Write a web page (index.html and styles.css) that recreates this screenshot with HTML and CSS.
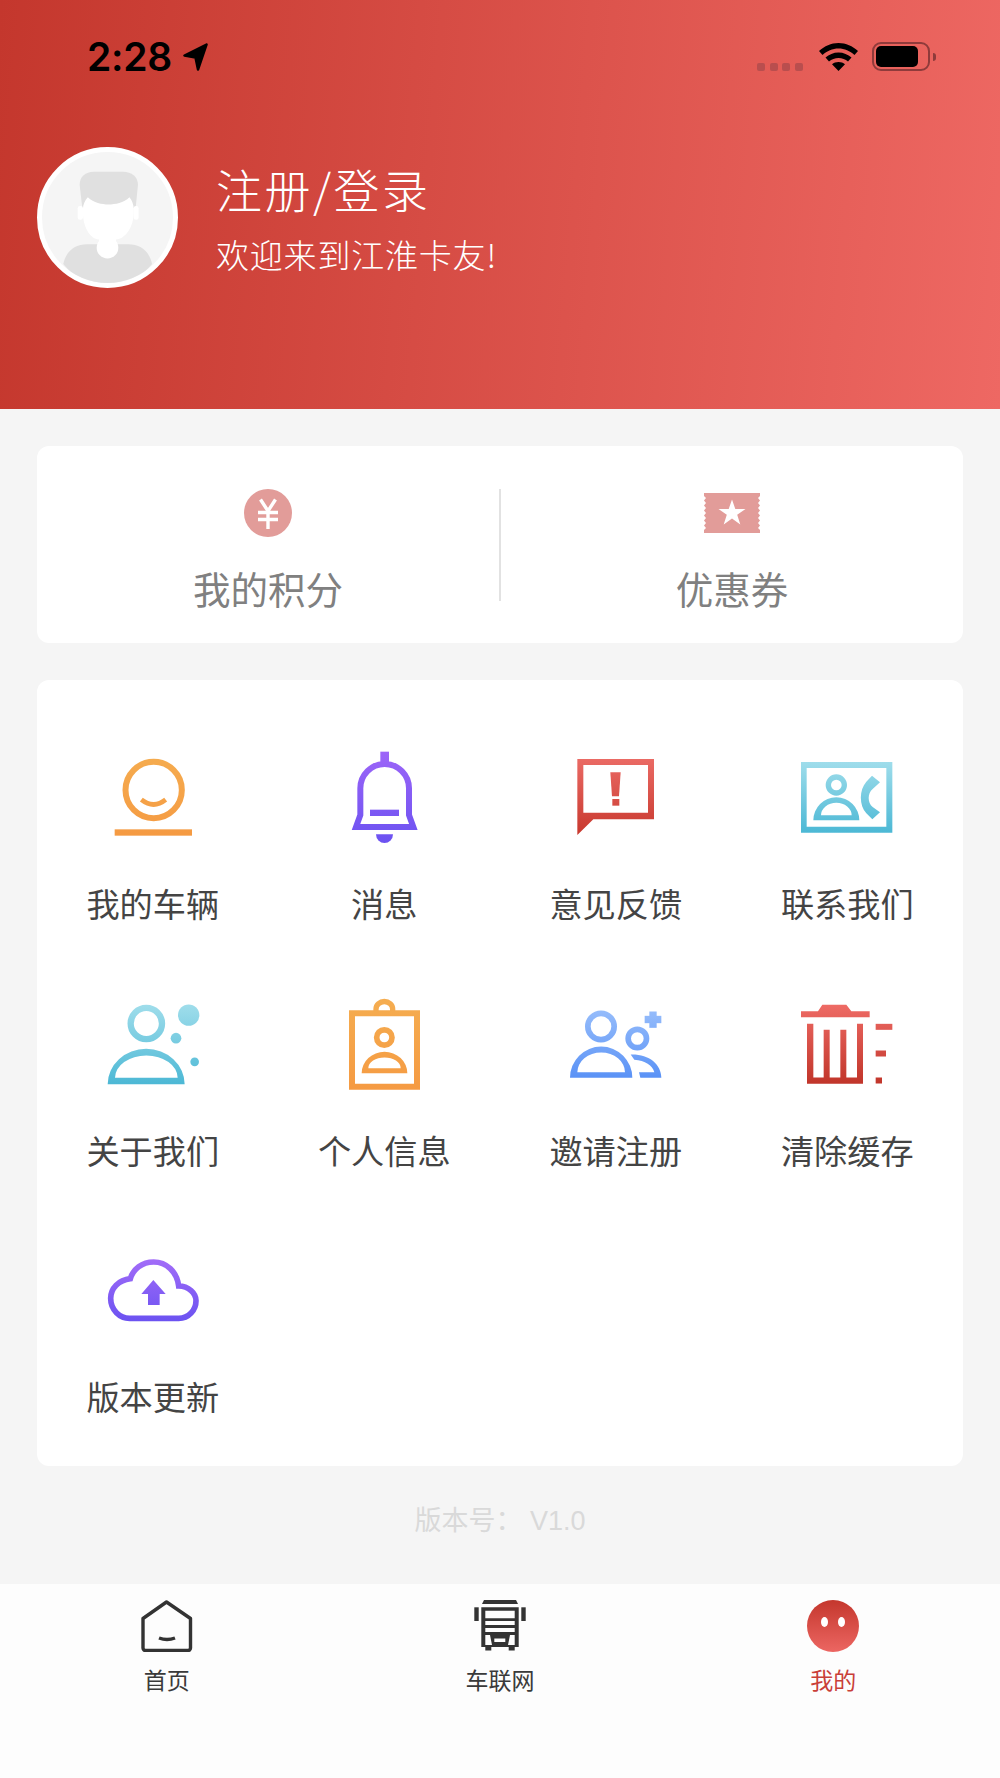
FILE: index.html
```html
<!DOCTYPE html>
<html lang="zh">
<head>
<meta charset="utf-8">
<title>我的</title>
<link rel="stylesheet" href="styles.css">
</head>
<body>
<div class="page">
  <header class="hero">
    <div class="status">
      <span class="time">2:28</span>
      <svg class="loc" viewBox="0 0 25 28"><path d="M23.500 1.500L1.500 12.500L12.500 14.500L15 26.500Z" fill="#000" stroke="#000" stroke-width="2.500" stroke-linejoin="round"/></svg>
      <div class="status-right">
        <div class="dots"><i></i><i></i><i></i><i></i></div>
        <svg class="wifi" viewBox="0 0 39 28"><path d="M19.5 0C12 0 5.5 3 0 8l3.5 4C8 8 13.500 5.500 19.500 5.500S31 8 35.500 12L39 8C33.500 3 27 0 19.500 0Z M19.500 9.500C14.500 9.500 10 11.500 6.500 14.500L10 18.500C12.500 16.500 16 15 19.500 15S26.500 16.500 29 18.500L32.500 14.500C29 11.500 24.500 9.500 19.500 9.500Z M19.500 19C17 19 14.800 19.800 13 21.200L19.500 28L26 21.200C24.200 19.800 22 19 19.500 19Z" fill="#000"/></svg>
        <div class="battery"><div class="battery-fill"></div></div>
        <div class="nub"></div>
      </div>
    </div>
    <div class="profile">
      <div class="avatar">
        <svg viewBox="32 30 400 400" class="avatar-art">
          <path d="M97 372C105 335 130 312 170 312H295C335 312 360 335 368 372C330 420 280 435 232 435S135 420 97 372Z" fill="#e0e0e0"/>
          <path d="M147 130C147 105 165 90 190 90H280C305 90 325 105 325 130L318 200H155Z" fill="#e0e0e0"/>
          <path d="M157 205C157 190 163 178 172 168C190 185 215 190 235 190S282 185 299 168C307 178 312 190 312 205V215C312 260 285 297 258 297V322A26 30 0 0 1 206 322V297C180 297 157 260 157 215Z" fill="#fff"/>
          <rect x="141" y="195" width="16" height="42" rx="7" fill="#fff"/>
          <rect x="312" y="195" width="15" height="42" rx="7" fill="#fff"/>
          <circle cx="232" cy="322" r="33" fill="#fff"/>
        </svg>
      </div>
      <div class="who">
        <div class="who-title">注册/登录</div>
        <div class="who-sub">欢迎来到江淮卡友!</div>
      </div>
    </div>
  </header>

  <main class="content">
    <section class="card points">
      <div class="point point-left">
        <svg class="point-icon" viewBox="0 0 56 48">
          <circle cx="28" cy="24" r="24" fill="#e29c99"/>
          <path d="M20.500 10.500L28 22L35.500 10.500 M18 23.500H38 M18 30.500H38 M28 22V40" fill="none" stroke="#fff" stroke-width="3.400"/>
        </svg>
        <span class="point-label">我的积分</span>
      </div>
      <div class="point">
        <svg class="point-icon" viewBox="0 0 56 48">
          <path d="M0 4H56V7L54 9L56 11.500L54 14L56 16.500L54 19L56 21.500L54 24L56 26.500L54 29L56 31.500L54 34L56 36.500L54 39L56 41V44H0V41L2 39L0 36.500L2 34L0 31.500L2 29L0 26.500L2 24L0 21.500L2 19L0 16.500L2 14L0 11.500L2 9L0 7Z" fill="#e29c99"/>
          <path d="M28 10.500L31.300 20H41.500L33.200 25.800L36.300 35.500L28 29.500L19.700 35.500L22.800 25.800L14.500 20H24.700Z" fill="#fff"/>
        </svg>
        <span class="point-label">优惠券</span>
      </div>
    </section>

    <section class="card menu">
      <div class="cell">
        <svg class="ico" viewBox="98 15 360 330">
          <defs><linearGradient id="g1" gradientUnits="userSpaceOnUse" x1="0" y1="85" x2="0" y2="317"><stop offset="0" stop-color="#f5ab4e"/><stop offset="1" stop-color="#f59a42"/></linearGradient></defs>
          <circle cx="280" cy="180" r="84.500" fill="none" stroke="url(#g1)" stroke-width="18"/>
          <path d="M243 209Q280 238 316 209" fill="none" stroke="url(#g1)" stroke-width="14"/>
          <rect x="163" y="298" width="232" height="19" fill="url(#g1)"/>
        </svg>
        <span class="cell-label">我的车辆</span>
      </div>
      <div class="cell">
        <svg class="ico" viewBox="792 15 360 330">
          <defs><linearGradient id="g2" gradientUnits="userSpaceOnUse" x1="0" y1="65" x2="0" y2="340"><stop offset="0" stop-color="#9d65f8"/><stop offset="1" stop-color="#6b52f1"/></linearGradient></defs>
          <rect x="961" y="65" width="26" height="34" fill="url(#g2)"/>
          <path d="M888 291H1060L1047 255V175A73 73 0 0 0 901 175V255Z" fill="none" stroke="url(#g2)" stroke-width="18"/>
          <rect x="930" y="239" width="87" height="19" fill="url(#g2)"/>
          <path d="M948 313H999A25.500 26 0 0 1 948 313Z" fill="url(#g2)"/>
        </svg>
        <span class="cell-label">消息</span>
      </div>
      <div class="cell">
        <svg class="ico" viewBox="168 15 360 330">
          <defs><linearGradient id="g3" gradientUnits="userSpaceOnUse" x1="0" y1="87" x2="0" y2="315"><stop offset="0" stop-color="#ea6a64"/><stop offset="1" stop-color="#c8382e"/></linearGradient></defs>
          <path fill-rule="evenodd" d="M232 87H462V268H280L232 315ZM250 105V248H444V105Z" fill="url(#g3)"/>
          <path d="M331 127H362L357 199H336Z" fill="url(#g3)"/>
          <rect x="337" y="207" width="21" height="20" fill="url(#g3)"/>
        </svg>
        <span class="cell-label">意见反馈</span>
      </div>
      <div class="cell">
        <svg class="ico" viewBox="862 15 360 330">
          <defs><linearGradient id="g4" gradientUnits="userSpaceOnUse" x1="0" y1="96" x2="0" y2="308"><stop offset="0" stop-color="#9fddeb"/><stop offset="1" stop-color="#4cb8d5"/></linearGradient></defs>
          <path fill-rule="evenodd" d="M904 96H1178V308H904ZM921 114V290H1160V114Z" fill="url(#g4)"/>
          <circle cx="1010" cy="165" r="24" fill="none" stroke="url(#g4)" stroke-width="16"/>
          <path fill-rule="evenodd" d="M941 271A69 69 0 0 1 1079 271ZM964 256H1056A46 38 0 0 0 964 256Z" fill="url(#g4)"/>
          <path d="M1117 137L1141 157L1119 177C1103 190 1103 218 1119 231L1141 247L1118 268L1100 250C1078 225 1078 180 1100 155Z" fill="url(#g4)"/>
        </svg>
        <span class="cell-label">联系我们</span>
      </div>

      <div class="cell">
        <svg class="ico" viewBox="98 4.500 360 330">
          <defs><linearGradient id="g5" gradientUnits="userSpaceOnUse" x1="0" y1="72" x2="0" y2="311"><stop offset="0" stop-color="#9fddeb"/><stop offset="1" stop-color="#4cb8d5"/></linearGradient></defs>
          <circle cx="258" cy="129" r="47" fill="none" stroke="url(#g5)" stroke-width="19"/>
          <circle cx="385" cy="104" r="32" fill="url(#g5)"/>
          <circle cx="347" cy="173" r="16" fill="url(#g5)"/>
          <circle cx="403" cy="244" r="13" fill="url(#g5)"/>
          <path fill-rule="evenodd" d="M142 311A115.500 106 0 0 1 373 311ZM164 292H352A94 67 0 0 0 164 292Z" fill="url(#g5)"/>
        </svg>
        <span class="cell-label">关于我们</span>
      </div>
      <div class="cell">
        <svg class="ico" viewBox="792 4.500 360 330">
          <defs><linearGradient id="g6" gradientUnits="userSpaceOnUse" x1="0" y1="55" x2="0" y2="328"><stop offset="0" stop-color="#f5ad50"/><stop offset="1" stop-color="#f59a42"/></linearGradient></defs>
          <path fill-rule="evenodd" d="M867 89H1080V328H867ZM885 107V310H1062V107Z" fill="url(#g6)"/>
          <path d="M948 92V86A25 23 0 0 1 998 86V92" fill="none" stroke="url(#g6)" stroke-width="16"/>
          <circle cx="973" cy="171" r="23" fill="none" stroke="url(#g6)" stroke-width="17"/>
          <path fill-rule="evenodd" d="M905 278A68.500 64 0 0 1 1042 278ZM925 263H1022A48.500 32 0 0 0 925 263Z" fill="url(#g6)"/>
        </svg>
        <span class="cell-label">个人信息</span>
      </div>
      <div class="cell">
        <svg class="ico" viewBox="168 4.500 360 330">
          <defs><linearGradient id="g7" gradientUnits="userSpaceOnUse" x1="0" y1="91" x2="0" y2="292"><stop offset="0" stop-color="#95bcfb"/><stop offset="1" stop-color="#5a92f6"/></linearGradient></defs>
          <circle cx="303" cy="138" r="39.500" fill="none" stroke="url(#g7)" stroke-width="17"/>
          <circle cx="412" cy="174" r="27.500" fill="none" stroke="url(#g7)" stroke-width="17"/>
          <rect x="448" y="93" width="22" height="49" fill="url(#g7)"/>
          <rect x="434" y="106" width="50" height="22" fill="url(#g7)"/>
          <path fill-rule="evenodd" d="M210 292A93.500 94 0 0 1 397 292ZM232 275H375A71.500 59 0 0 0 232 275Z" fill="url(#g7)"/>
          <path d="M392 222C445 220 484 250 484 292H421L417 275H463C458 255 435 240 403 238Z" fill="url(#g7)"/>
        </svg>
        <span class="cell-label">邀请注册</span>
      </div>
      <div class="cell">
        <svg class="ico" viewBox="862 4.500 360 330">
          <defs><linearGradient id="g8" gradientUnits="userSpaceOnUse" x1="0" y1="73" x2="0" y2="310"><stop offset="0" stop-color="#ee6b65"/><stop offset="1" stop-color="#c1352a"/></linearGradient></defs>
          <path d="M904 92H955L968 73H1040L1055 92H1110V110H904Z" fill="url(#g8)"/>
          <path d="M922 130H941V291H972V148H990V291H1022V148H1040V291H1072V130H1090V310H922Z" fill="url(#g8)"/>
          <rect x="1128" y="130" width="50" height="18" fill="url(#g8)"/>
          <rect x="1128" y="210" width="31" height="18" fill="url(#g8)"/>
          <rect x="1128" y="291" width="19" height="18" fill="url(#g8)"/>
        </svg>
        <span class="cell-label">清除缓存</span>
      </div>

      <div class="cell">
        <svg class="ico" viewBox="98 -6 360 330">
          <defs><linearGradient id="g9" gradientUnits="userSpaceOnUse" x1="0" y1="88" x2="0" y2="274"><stop offset="0" stop-color="#a26cf8"/><stop offset="1" stop-color="#6b52f1"/></linearGradient></defs>
          <path d="M208 265H355C385 265 407 240 407 212C407 190 385 168 355 168C350 125 318 96 280 96C245 96 218 118 210 146C175 150 151 175 151 205C151 240 178 265 208 265Z" fill="none" stroke="url(#g9)" stroke-width="17"/>
          <path d="M279 150L316 192H298V225H263V192H243Z" fill="url(#g9)"/>
        </svg>
        <span class="cell-label">版本更新</span>
      </div>
    </section>

    <div class="version">版本号： V1.0</div>
  </main>

  <nav class="tabs">
    <div class="tab">
      <svg class="tab-icon" viewBox="0 0 52 52">
        <path d="M25.500 2L49.500 18.500V48A2.500 2.500 0 0 1 47 50.500H4.500A2.500 2.500 0 0 1 2 48V18.500Z" fill="none" stroke="#333" stroke-width="3.400" stroke-linejoin="round"/>
        <path d="M18 38Q26 41 34 38" fill="none" stroke="#333" stroke-width="3.400"/>
      </svg>
      <span class="tab-label">首页</span>
    </div>
    <div class="tab">
      <svg class="tab-icon" viewBox="0 0 52 52">
        <path d="M10 0H42L44 4H8Z" fill="#333"/>
        <rect x="0.300" y="7.300" width="4.400" height="13.700" fill="#333"/>
        <rect x="47.300" y="7.300" width="4.400" height="13.700" fill="#333"/>
        <path fill-rule="evenodd" d="M7.300 7.300H44.700V47H40.700V50.500H34.700V47H17.300V50.500H11.300V47H7.300ZM11.300 10.700V18.300H40.700V10.700ZM11.300 21V25H40.700V21ZM11.300 28V32H40.700V28ZM11.300 35V45H18L16 35ZM40.700 35H36L34 45H40.700ZM20.300 38.500V42H31.300V38.500Z" fill="#333"/>
      </svg>
      <span class="tab-label">车联网</span>
    </div>
    <div class="tab">
      <svg class="tab-icon" viewBox="0 0 52 52">
        <defs><linearGradient id="g10" x1="0" y1="0" x2="0" y2="1"><stop offset="0" stop-color="#c4372d"/><stop offset="1" stop-color="#ec6662"/></linearGradient></defs>
        <circle cx="26" cy="26" r="26" fill="url(#g10)"/>
        <ellipse cx="17.500" cy="22" rx="3.500" ry="5" fill="#fff"/>
        <ellipse cx="34.500" cy="22" rx="3.500" ry="5" fill="#fff"/>
      </svg>
      <span class="tab-label tab-label-on">我的</span>
    </div>
  </nav>
</div>
</body>
</html>
```

FILE: styles.css
```css
* { box-sizing: border-box; }
html, body { margin: 0; padding: 0; }
body {
  font-family: "Noto Sans CJK SC", "Noto Sans", sans-serif;
  background: #f5f5f5;
}
.page {
  width: 1000px;
  height: 1778px;
  display: flex;
  flex-direction: column;
  overflow: hidden;
}
.hero {
  height: 409px;
  background: linear-gradient(95deg, #c4372d 0%, #ee6863 100%);
  padding-top: 42px;
}
.status {
  display: flex;
  align-items: center;
  height: 29px;
  padding: 0 64px 0 87px;
}
.time {
  font-family: Inter, "Liberation Sans", sans-serif;
  font-weight: 600;
  font-size: 39px;
  line-height: 29px;
  letter-spacing: -0.3px;
  color: #000;
}
.loc { width: 25px; height: 28px; margin-left: 11px; }
.status-right {
  margin-left: auto;
  display: flex;
  align-items: center;
}
.dots { display: flex; gap: 4.5px; margin-top: 21px; margin-right: 16px; }
.dots i {
  display: block;
  width: 8px;
  height: 8px;
  border-radius: 2px;
  background: #b94e4e;
}
.wifi { width: 39px; height: 28px; }
.battery {
  width: 58px;
  height: 29px;
  margin-left: 14.500px;
  border: 2.5px solid #8f3b3b;
  border-radius: 9px;
  padding: 2px;
}
.battery-fill {
  width: 42px;
  height: 100%;
  background: #000;
  border-radius: 5px;
}
.nub {
  width: 3px;
  height: 8px;
  margin-left: 3px;
  background: #8f3b3b;
  border-radius: 0 3px 3px 0;
}
.profile {
  display: flex;
  align-items: center;
  padding: 75.500px 0 0 37px;
}
.avatar {
  width: 141px;
  height: 141px;
  border-radius: 50%;
  border: 5px solid #fff;
  background: #f5f5f5;
  overflow: hidden;
  flex: none;
}
.avatar-art { display: block; width: 131px; height: 131px; }
.who { margin-left: 38px; color: #fff; }
.who-title { font-size: 46px; line-height: 64px; font-weight: 300; letter-spacing: 2.500px; margin-top: -2px; }
.who-sub { font-size: 33px; line-height: 46px; font-weight: 300; margin-top: 11px; letter-spacing: 0.8px; }
.content {
  flex: 1;
  padding: 37px 37px 0;
  display: flex;
  flex-direction: column;
}
.card { background: #fff; border-radius: 12px; }
.points {
  height: 197px;
  display: grid;
  grid-template-columns: 464px 1fr;
  padding-top: 43px;
}
.point {
  display: flex;
  flex-direction: column;
  align-items: center;
  height: 112px;
}
.point-left { border-right: 2px solid #e2e2e2; }
.point-icon { width: 56px; height: 48px; display: block; flex: none; }
.point-label {
  font-size: 37.500px;
  line-height: 52px;
  margin-top: 25px;
  color: #808080;
  font-weight: 400;
  flex: none;
}
.menu {
  margin-top: 37px;
  height: 786px;
  display: grid;
  grid-template-columns: repeat(4, 1fr);
  grid-auto-rows: 246.500px;
  padding-top: 55px;
}
.cell {
  display: flex;
  flex-direction: column;
  align-items: center;
}
.ico { width: 120px; height: 110px; display: block; }
.cell-label {
  font-size: 33.200px;
  line-height: 46px;
  margin-top: 35px;
  color: #444;
  font-weight: 400;
}
.version {
  margin-top: 35px;
  text-align: center;
  font-family: "Liberation Sans", "Noto Sans CJK SC", sans-serif;
  font-size: 27px;
  line-height: 40px;
  color: #d9d9d9;
}
.tabs {
  height: 194px;
  flex: none;
  background: #fdfdfd;
  display: grid;
  grid-template-columns: repeat(3, 1fr);
  padding-top: 16px;
}
.tab { display: flex; flex-direction: column; align-items: center; }
.tab-icon { width: 52px; height: 52px; display: block; }
.tab-label {
  font-size: 23px;
  line-height: 32px;
  margin-top: 11px;
  color: #3a3a3a;
  font-weight: 400;
}
.tab-label-on { color: #c93f38; }
```
